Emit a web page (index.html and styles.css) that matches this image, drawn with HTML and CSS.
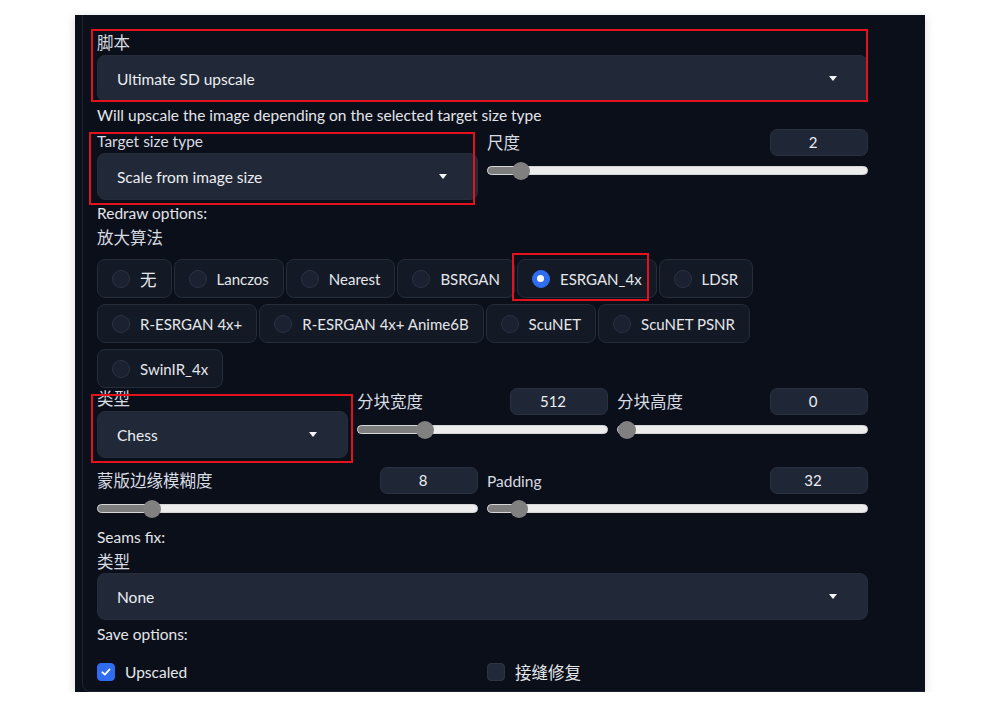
FILE: index.html
```html
<!DOCTYPE html>
<html lang="zh">
<head>
<meta charset="utf-8">
<title>Ultimate SD upscale</title>
<link rel="stylesheet" href="styles.css">
</head>
<body>
<div class="page">
  <div class="panel">
    <div class="inner">
      <div class="content">
        <div class="field f-script">
          <div class="label cjk">脚本</div>
          <div class="dropdown"><span>Ultimate SD upscale</span><i class="caret"></i></div>
        </div>
        <div class="info">Will upscale the image depending on the selected target size type</div>

        <div class="grid2 row-target">
          <div class="field f-target">
            <div class="label">Target size type</div>
            <div class="dropdown"><span>Scale from image size</span><i class="caret"></i></div>
          </div>
          <div class="slider">
            <div class="slider-head"><span class="label cjk">尺度</span><span class="num">2</span></div>
            <div class="track"><div class="fill" style="width:8.7%"></div><div class="thumb" style="left:8.7%"></div></div>
          </div>
        </div>

        <div class="section redraw">Redraw options:</div>
        <div class="label cjk algo">放大算法</div>
        <div class="radios">
          <div class="radio"><i class="dot"></i><span class="cjk">无</span></div>
          <div class="radio"><i class="dot"></i><span>Lanczos</span></div>
          <div class="radio"><i class="dot"></i><span>Nearest</span></div>
          <div class="radio"><i class="dot"></i><span>BSRGAN</span></div>
          <div class="radio"><i class="dot on"></i><span>ESRGAN_4x</span></div>
          <div class="radio"><i class="dot"></i><span>LDSR</span></div>
          <div class="radio"><i class="dot"></i><span>R-ESRGAN 4x+</span></div>
          <div class="radio"><i class="dot"></i><span>R-ESRGAN 4x+ Anime6B</span></div>
          <div class="radio"><i class="dot"></i><span>ScuNET</span></div>
          <div class="radio"><i class="dot"></i><span>ScuNET PSNR</span></div>
          <div class="radio"><i class="dot"></i><span>SwinIR_4x</span></div>
        </div>

        <div class="grid3 row-type">
          <div class="field">
            <div class="label cjk">类型</div>
            <div class="dropdown"><span>Chess</span><i class="caret"></i></div>
          </div>
          <div class="slider">
            <div class="slider-head"><span class="label cjk">分块宽度</span><span class="num">512</span></div>
            <div class="track"><div class="fill" style="width:26.8%"></div><div class="thumb" style="left:26.8%"></div></div>
          </div>
          <div class="slider">
            <div class="slider-head"><span class="label cjk">分块高度</span><span class="num">0</span></div>
            <div class="track"><div class="fill" style="width:3.6%"></div><div class="thumb" style="left:3.6%"></div></div>
          </div>
        </div>

        <div class="grid2 row-blur">
          <div class="slider">
            <div class="slider-head"><span class="label cjk">蒙版边缘模糊度</span><span class="num">8</span></div>
            <div class="track"><div class="fill" style="width:14.2%"></div><div class="thumb" style="left:14.2%"></div></div>
          </div>
          <div class="slider">
            <div class="slider-head"><span class="label">Padding</span><span class="num">32</span></div>
            <div class="track"><div class="fill" style="width:8.1%"></div><div class="thumb" style="left:8.1%"></div></div>
          </div>
        </div>

        <div class="section seams">Seams fix:</div>
        <div class="field f-seams">
          <div class="label cjk">类型</div>
          <div class="dropdown"><span>None</span><i class="caret"></i></div>
        </div>
        <div class="section save">Save options:</div>

        <div class="grid2 checks">
          <label class="check"><i class="box on"><svg viewBox="0 0 16 16" width="12" height="12"><path d="M3.2 8.4 L6.5 11.5 L12.8 4.6" fill="none" stroke="#fff" stroke-width="2.4" stroke-linecap="round" stroke-linejoin="round"/></svg></i><span>Upscaled</span></label>
          <label class="check"><i class="box"></i><span class="cjk">接缝修复</span></label>
        </div>
      </div>
    </div>

    <div class="mark m1"></div>
    <div class="mark m2"></div>
    <div class="mark m3"></div>
    <div class="mark m4"></div>
  </div>
</div>
</body>
</html>
```

FILE: styles.css
```css
* { box-sizing: border-box; }

body {
  margin: 0;
  background: #ffffff;
  font-family: "Lato", "Noto Sans CJK SC", sans-serif;
  font-size: 15.5px;
  color: #e5e7eb;
}

.cjk {
  font-size: 16.5px;
}

.page {
  padding: 15px 0 0 75px;
}

.panel {
  position: relative;
  width: 850px;
  height: 677px;
  background: #0b0f19;
  overflow: hidden;
  box-shadow: 0 2px 10px rgba(0, 0, 0, 0.14);
}

.inner {
  margin: -10px 0 0 7px;
  width: 900px;
  height: 687px;
  border-left: 1px solid #1d2331;
  border-bottom: 1px solid #1d2331;
  border-bottom-left-radius: 8px;
  padding: 27px 0 0 14px;
}

.content {
  width: 771px;
}

.label {
  line-height: 22px;
  color: #d7dbe2;
}

.field .label {
  margin-bottom: 1px;
}

.dropdown {
  height: 47px;
  background: #212837;
  border: 1px solid #252c3b;
  border-radius: 8px;
  display: flex;
  align-items: center;
  justify-content: space-between;
  padding: 0 30px 0 19px;
  color: #eceef2;
}

.caret {
  width: 0;
  height: 0;
  border-left: 4.5px solid transparent;
  border-right: 4.5px solid transparent;
  border-top: 5px solid #f4f5f7;
}

.info {
  margin-top: 2px;
  line-height: 22px;
  color: #e2e5ea;
}

.grid2 {
  display: grid;
  grid-template-columns: 1fr 1fr;
  column-gap: 9px;
}

.grid3 {
  display: grid;
  grid-template-columns: 1fr 1fr 1fr;
  column-gap: 9px;
}

.row-target {
  margin-top: 3px;
  align-items: start;
}

.row-target .f-target {
  margin-top: 1px;
}

.slider-head {
  height: 27px;
  display: flex;
  align-items: center;
  justify-content: space-between;
}

.num {
  width: 98px;
  height: 27px;
  line-height: 25px;
  background: #1f2636;
  border: 1px solid #283042;
  border-radius: 7px;
  text-align: center;
  padding-right: 12px;
  color: #eceef2;
  font-size: 15px;
}

.track {
  position: relative;
  margin-top: 10px;
  height: 9px;
  background: #ececec;
  border: 1px solid #d6d6d6;
  border-radius: 5px;
}

.fill {
  height: 100%;
  background: #7d7d7d;
  border-radius: 5px 0 0 5px;
}

.thumb {
  position: absolute;
  top: 50%;
  width: 18px;
  height: 18px;
  margin: -9px 0 0 -9px;
  border-radius: 50%;
  background: #808080;
}

.section {
  line-height: 22px;
  color: #e2e5ea;
}

.redraw { margin-top: 2px; }
.algo { margin-top: 3px; }

.radios {
  margin-top: 10px;
  width: 760px;
  display: flex;
  flex-wrap: wrap;
  column-gap: 2px;
  row-gap: 6px;
  font-size: 15px;
}

.radio {
  height: 39px;
  display: flex;
  align-items: center;
  padding: 0 14px 0 14px;
  background: #131925;
  border: 1px solid #252c3a;
  border-radius: 8px;
  color: #e5e7eb;
}

.radio .cjk {
  font-size: 16.5px;
}

.dot {
  flex: none;
  width: 18px;
  height: 18px;
  border-radius: 50%;
  background: #1b2130;
  border: 1px solid #2b3243;
  margin-right: 10px;
  position: relative;
}

.dot.on {
  background: #2f6cf0;
  border-color: #2f6cf0;
}

.dot.on::after {
  content: "";
  position: absolute;
  left: 50%;
  top: 50%;
  width: 7px;
  height: 7px;
  margin: -3.5px 0 0 -3.5px;
  border-radius: 50%;
  background: #ffffff;
}

.row-type {
  margin-top: 0;
  align-items: start;
}

.row-blur {
  margin-top: 9px;
}

.seams { margin-top: 13px; }

.f-seams { margin-top: 3px; }
.f-seams .label { margin-bottom: 0; }

.save { margin-top: 3px; }

.checks {
  margin-top: 16px;
}

.check {
  display: flex;
  align-items: center;
  height: 22px;
  color: #e5e7eb;
}

.box {
  flex: none;
  width: 18px;
  height: 18px;
  border-radius: 4px;
  background: #222a3a;
  border: 1px solid #2b3345;
  margin-right: 10px;
  display: flex;
  align-items: center;
  justify-content: center;
}

.box.on {
  background: #2f6cf0;
  border-color: #2f6cf0;
}

.mark {
  position: absolute;
  border: 2px solid #e3121c;
}

.m1 { left: 16px; top: 14px; width: 777px; height: 73px; }
.m2 { left: 14px; top: 117px; width: 386px; height: 73px; }
.m3 { left: 437px; top: 238px; width: 137px; height: 48px; }
.m4 { left: 16px; top: 379px; width: 262px; height: 69px; }
```
